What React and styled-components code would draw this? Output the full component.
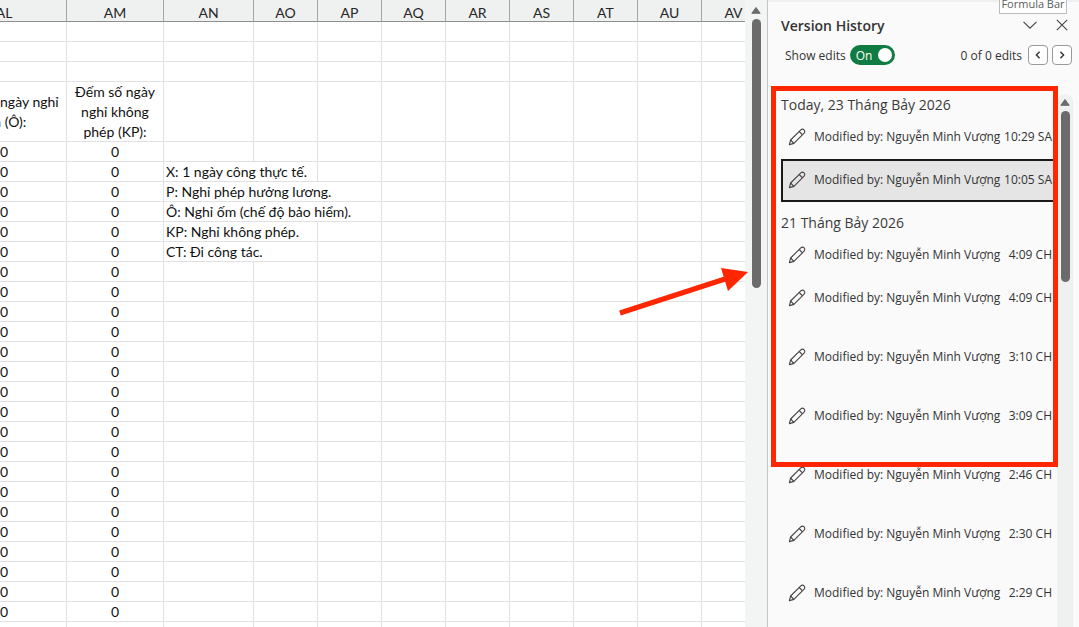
import React from "react";
import styled, { createGlobalStyle } from "styled-components";

const GlobalStyle = createGlobalStyle`
  * { box-sizing: border-box; }
  body { margin: 0; background: #fafafa; }
  button { font: inherit; color: inherit; cursor: pointer; }
`;

const uiFont = `"Open Sans", "Noto Sans", sans-serif`;
const sheetFont = `Lato, "Noto Sans", sans-serif`;
const annotationRed = "#ff2600";

const Workspace = styled.div`
  display: flex;
  height: 100vh;
  overflow: hidden;
  font-family: ${uiFont};
`;

const SheetArea = styled.main`
  position: relative;
  flex: 1;
  min-width: 0;
  display: flex;
`;

const GridViewport = styled.div`
  flex: 1;
  min-width: 0;
  overflow: hidden;
  background: #fff;
`;

/* The grid is scrolled sideways, so the first column starts out of view. */
const Grid = styled.table`
  margin-left: -58px;
  table-layout: fixed;
  width: 0;
  border-collapse: separate;
  border-spacing: 0;
  font-family: ${sheetFont};
  font-size: 14px;
  line-height: 20px;
  color: #111;
`;

const Column = styled.col`
  width: ${(p) => p.$width}px;
`;

const ColumnHeader = styled.th`
  height: 22px;
  padding: 3px 0 0;
  font-weight: 400;
  line-height: 17px;
  color: #262626;
  background: linear-gradient(#f0f0f0 2px, #eff1f0 2px);
  border-right: 1px solid #a6a6a6;
  border-bottom: 1px solid #8f8f8f;
`;

const Cell = styled.td`
  height: 20px;
  padding: 0 0 0 ${(p) => (p.$note ? 2 : 0)}px;
  line-height: 19px;
  text-align: ${(p) => (p.$note ? "left" : "center")};
  white-space: nowrap;
  border-right: 1px solid #e1e1e1;
  border-bottom: 1px solid #e1e1e1;
`;

const WrappedTitle = styled.div`
  display: flex;
  align-items: center;
  justify-content: center;
  height: 59px;
  line-height: 20px;
  white-space: pre;
`;

const ScrollTrack = styled.div`
  flex: none;
  display: flex;
  flex-direction: column;
  align-items: center;
  gap: 5px;
  width: ${(p) => p.$width}px;
  padding-top: ${(p) => p.$inset}px;
  background: ${(p) => (p.$rounded ? "#eff1f0" : "#f3f5f4")};
  border-radius: ${(p) => (p.$rounded ? "8px 8px 0 0" : 0)};
`;

const ScrollThumb = styled.div`
  width: 9px;
  height: ${(p) => p.$length}px;
  border-radius: 5px;
  background: #6b6b6b;
`;

const Panel = styled.aside`
  position: relative;
  flex: none;
  display: flex;
  flex-direction: column;
  width: 312px;
  border-left: 1px solid #c4c4c4;
  background: linear-gradient(#f0f0f0 2px, #fafafa 2px);
  color: #333;
  font-size: 12px;
`;

const PanelHeader = styled.header`
  display: flex;
  align-items: center;
  height: 32px;
  margin-top: 9px;
  padding: 0 10px 0 13px;
`;

const PanelTitle = styled.h1`
  flex: 1;
  margin: 0;
  font-size: 14px;
  font-weight: 600;
  color: #333;
`;

const IconButton = styled.button`
  display: grid;
  place-items: center;
  width: 14px;
  height: 14px;
  margin-left: 18px;
  padding: 0;
  border: 0;
  background: none;
`;

const EditsBar = styled.div`
  display: flex;
  align-items: center;
  height: 28px;
  padding: 0 7px 0 17px;
`;

const SwitchLabel = styled.label`
  display: flex;
  align-items: center;
  gap: 4px;
  flex: 1;
`;

const Switch = styled.span`
  position: relative;
  display: flex;
  align-items: center;
  justify-content: space-between;
  width: 45px;
  height: 20px;
  padding: 0 3px 0 6px;
  border-radius: 10px;
  background: #107c41;
  color: #fff;

  &::after {
    content: "";
    width: 14px;
    height: 14px;
    border-radius: 50%;
    background: #fff;
  }
`;

const SwitchInput = styled.input`
  position: absolute;
  inset: 0;
  width: 100%;
  height: 100%;
  margin: 0;
  opacity: 0;
`;

const StepButton = styled.button`
  display: grid;
  place-items: center;
  width: 20px;
  height: 20px;
  margin-left: ${(p) => (p.$first ? 6 : 4)}px;
  padding: 0;
  border: 1px solid #9a9a9a;
  border-radius: 4px;
  background: #fff;
`;

const History = styled.div`
  flex: 1;
  min-height: 0;
  display: flex;
  margin-top: 25px;
  padding-right: 6px;
`;

const HistoryList = styled.div`
  flex: 1;
  min-width: 0;
  overflow: hidden;
  padding-left: 13px;
`;

const DayHeading = styled.h2`
  margin: ${(p) => (p.$later ? 10 : 0)}px 0 0;
  font-size: 14px;
  font-weight: 400;
  line-height: 22px;
  color: #3b3b3b;
`;

const Versions = styled.ul`
  margin: 0;
  padding: 0;
  list-style: none;
`;

const VersionItem = styled.li`
  margin-top: ${(p) => (p.$spaced ? 16 : 0)}px;
`;

const VersionButton = styled.button`
  display: flex;
  align-items: center;
  width: 100%;
  height: 43px;
  padding: 0 3px 2px 5px;
  text-align: left;
  white-space: nowrap;
  border: 2px solid ${(p) => (p.$selected ? "#1a1a1a" : "transparent")};
  background: ${(p) => (p.$selected ? "#e5e5e5" : "transparent")};
`;

const PencilIcon = styled.svg`
  flex: none;
  margin-right: 8px;
`;

const Author = styled.span`
  flex: 1;
`;

const RangeHighlight = styled.div`
  position: absolute;
  top: 86px;
  left: 3px;
  right: 21px;
  height: 381px;
  border: 5px solid ${annotationRed};
  pointer-events: none;
`;

const Arrow = styled.svg`
  position: absolute;
  top: 264px;
  right: 18px;
  pointer-events: none;
`;

const Tooltip = styled.div`
  position: absolute;
  top: -6px;
  right: 12px;
  width: 68px;
  height: 20px;
  text-align: center;
  white-space: nowrap;
  line-height: 18px;
  font-size: 11px;
  color: #5c5c5c;
  background: #fff;
  border: 1px solid #bdbdbd;
`;

const columns = [
  ["AL", 125], ["AM", 97], ["AN", 90], ["AO", 64], ["AP", 64], ["AQ", 64],
  ["AR", 64], ["AS", 64], ["AT", 64], ["AU", 64], ["AV", 64],
];

const notes = {
  1: { text: "X: 1 ngày công thực tế.", span: 2 },
  2: { text: "P: Nghỉ phép hưởng lương.", span: 3 },
  3: { text: "Ô: Nghỉ ốm (chế độ bảo hiểm).", span: 3 },
  4: { text: "KP: Nghỉ không phép.", span: 2 },
  5: { text: "CT: Đi công tác.", span: 2 },
};

const days = [
  {
    title: "Today, 23 Tháng Bảy 2026",
    versions: [
      { time: "10:29 SA" },
      { time: "10:05 SA", selected: true },
    ],
  },
  {
    title: "21 Tháng Bảy 2026",
    versions: [
      { time: "4:09 CH" },
      { time: "4:09 CH" },
      { time: "3:10 CH", spaced: true },
      { time: "3:09 CH", spaced: true },
      { time: "2:46 CH", spaced: true },
      { time: "2:30 CH", spaced: true },
      { time: "2:29 CH", spaced: true },
    ],
  },
];

const range = (n) => Array.from({ length: n }, (_, i) => i);

function BlankCells({ count }) {
  return range(count).map((i) => <Cell key={i} />);
}

function UpTriangle() {
  return (
    <svg width="10" height="7" viewBox="0 0 10 7" aria-hidden="true">
      <path d="M5 .5 9.2 6.3H.8Z" fill="#6b6b6b" stroke="#6b6b6b" strokeLinejoin="round" />
    </svg>
  );
}

function Pencil() {
  return (
    <PencilIcon width="18" height="18" viewBox="0 0 18 18" fill="none" stroke="#444" strokeWidth="1.1" strokeLinejoin="round" aria-hidden="true">
      <path d="M1.4 16.6 2.6 12 12.8 1.9a2.3 2.3 0 0 1 3.3 3.3L5.9 15.4Z" />
      <path d="M11.2 3.5 14.5 6.8M2.6 12 5.9 15.4" />
    </PencilIcon>
  );
}

function Sheet() {
  return (
    <SheetArea>
      <GridViewport>
        <Grid>
          <colgroup>
            {columns.map(([name, width]) => <Column key={name} $width={width} />)}
          </colgroup>
          <thead>
            <tr>
              {columns.map(([name]) => <ColumnHeader key={name} scope="col">{name}</ColumnHeader>)}
            </tr>
          </thead>
          <tbody>
            {range(3).map((i) => (
              <tr key={i}><BlankCells count={11} /></tr>
            ))}
            <tr>
              <Cell><WrappedTitle>{"Đếm số ngày nghỉ\nốm (Ô):"}</WrappedTitle></Cell>
              <Cell><WrappedTitle>{"Đếm số ngày\nnghỉ không\nphép (KP):"}</WrappedTitle></Cell>
              <BlankCells count={9} />
            </tr>
            {range(24).map((i) => (
              <tr key={i}>
                <Cell>0</Cell>
                <Cell>0</Cell>
                {notes[i] && <Cell $note colSpan={notes[i].span}>{notes[i].text}</Cell>}
                <BlankCells count={9 - (notes[i] ? notes[i].span : 0)} />
              </tr>
            ))}
            <tr><BlankCells count={11} /></tr>
          </tbody>
        </Grid>
      </GridViewport>
      <ScrollTrack $width={22} $inset={7}>
        <UpTriangle />
        <ScrollThumb $length={269} />
      </ScrollTrack>
      <Arrow width="130" height="52" viewBox="0 0 130 52" aria-hidden="true">
        <path d="M1 49 106 15" stroke={annotationRed} strokeWidth="5" />
        <path d="M102 4 129 8 109 27Z" fill={annotationRed} />
      </Arrow>
    </SheetArea>
  );
}

function VersionHistory() {
  return (
    <Panel>
      <PanelHeader>
        <PanelTitle>Version History</PanelTitle>
        <IconButton aria-label="Task pane options">
          <svg width="14" height="8" viewBox="0 0 14 8" fill="none" stroke="#444" strokeWidth="1.1">
            <path d="M.5.8 7 7.2 13.5.8" />
          </svg>
        </IconButton>
        <IconButton aria-label="Close">
          <svg width="12" height="12" viewBox="0 0 12 12" stroke="#444" strokeWidth="1.1">
            <path d="M.8.8 11.2 11.2M11.2.8.8 11.2" />
          </svg>
        </IconButton>
      </PanelHeader>
      <EditsBar>
        <SwitchLabel>
          Show edits
          <Switch>
            On
            <SwitchInput type="checkbox" role="switch" defaultChecked />
          </Switch>
        </SwitchLabel>
        <span>0 of 0 edits</span>
        <StepButton $first aria-label="Previous edit">
          <svg width="6" height="8" viewBox="0 0 6 8" fill="none" stroke="#333" strokeWidth="1.4">
            <path d="M4.6.8 1.4 4 4.6 7.2" />
          </svg>
        </StepButton>
        <StepButton aria-label="Next edit">
          <svg width="6" height="8" viewBox="0 0 6 8" fill="none" stroke="#333" strokeWidth="1.4">
            <path d="M1.4.8 4.6 4 1.4 7.2" />
          </svg>
        </StepButton>
      </EditsBar>
      <History>
        <HistoryList>
          {days.map((day, d) => (
            <section key={day.title}>
              <DayHeading $later={d > 0}>{day.title}</DayHeading>
              <Versions>
                {day.versions.map((v, i) => (
                  <VersionItem key={i} $spaced={v.spaced}>
                    <VersionButton $selected={v.selected}>
                      <Pencil />
                      <Author>Modified by: Nguyễn Minh Vượng</Author>
                      <span>{v.time}</span>
                    </VersionButton>
                  </VersionItem>
                ))}
              </Versions>
            </section>
          ))}
        </HistoryList>
        <ScrollTrack $width={16} $inset={5} $rounded>
          <UpTriangle />
          <ScrollThumb $length={171} />
        </ScrollTrack>
      </History>
      <RangeHighlight />
      <Tooltip role="tooltip">Formula Bar</Tooltip>
    </Panel>
  );
}

export default function App() {
  return (
    <>
      <GlobalStyle />
      <Workspace>
        <Sheet />
        <VersionHistory />
      </Workspace>
    </>
  );
}
